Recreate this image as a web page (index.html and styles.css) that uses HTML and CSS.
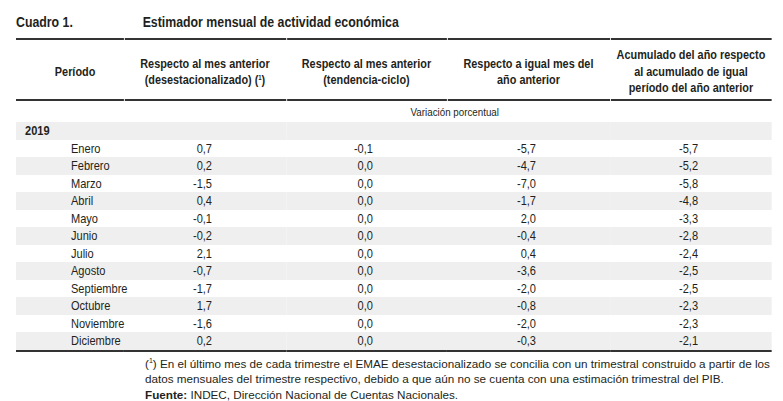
FILE: index.html
```html
<!DOCTYPE html>
<html lang="es">
<head>
<meta charset="utf-8">
<title>Cuadro 1. Estimador mensual de actividad económica</title>
<link rel="stylesheet" href="styles.css">
</head>
<body>
<div class="page">
  <div class="condensed">
    <div class="title">
      <span class="title-num">Cuadro 1.</span>
      <span class="title-text">Estimador mensual de actividad económica</span>
    </div>
    <table class="data">
      <colgroup>
        <col class="c1"><col class="c2"><col class="c3"><col class="c4"><col class="c5">
      </colgroup>
      <thead>
        <tr class="head">
          <th>Período</th>
          <th>Respecto al mes anterior<br>(desestacionalizado) (<sup>1</sup>)</th>
          <th>Respecto al mes anterior<br>(tendencia-ciclo)</th>
          <th>Respecto a igual mes del<br>año anterior</th>
          <th>Acumulado del año respecto<br>al acumulado de igual<br>período del año anterior</th>
        </tr>
      </thead>
      <tbody>
        <tr class="unit"><td></td><td colspan="4">Variación porcentual</td></tr>
        <tr class="shade year"><td>2019</td><td></td><td></td><td></td><td></td></tr>
        <tr><td class="m">Enero</td><td>0,7</td><td>-0,1</td><td>-5,7</td><td>-5,7</td></tr>
        <tr class="shade"><td class="m">Febrero</td><td>0,2</td><td>0,0</td><td>-4,7</td><td>-5,2</td></tr>
        <tr><td class="m">Marzo</td><td>-1,5</td><td>0,0</td><td>-7,0</td><td>-5,8</td></tr>
        <tr class="shade"><td class="m">Abril</td><td>0,4</td><td>0,0</td><td>-1,7</td><td>-4,8</td></tr>
        <tr><td class="m">Mayo</td><td>-0,1</td><td>0,0</td><td>2,0</td><td>-3,3</td></tr>
        <tr class="shade"><td class="m">Junio</td><td>-0,2</td><td>0,0</td><td>-0,4</td><td>-2,8</td></tr>
        <tr><td class="m">Julio</td><td>2,1</td><td>0,0</td><td>0,4</td><td>-2,4</td></tr>
        <tr class="shade"><td class="m">Agosto</td><td>-0,7</td><td>0,0</td><td>-3,6</td><td>-2,5</td></tr>
        <tr><td class="m">Septiembre</td><td>-1,7</td><td>0,0</td><td>-2,0</td><td>-2,5</td></tr>
        <tr class="shade"><td class="m">Octubre</td><td>1,7</td><td>0,0</td><td>-0,8</td><td>-2,3</td></tr>
        <tr><td class="m">Noviembre</td><td>-1,6</td><td>0,0</td><td>-2,0</td><td>-2,3</td></tr>
        <tr class="shade last"><td class="m">Diciembre</td><td>0,2</td><td>0,0</td><td>-0,3</td><td>-2,1</td></tr>
      </tbody>
    </table>
  </div>
  <div class="notes">
    <p class="note">(<sup>1</sup>) En el último mes de cada trimestre el EMAE desestacionalizado se concilia con un trimestral construido a partir de los<br>datos mensuales del trimestre respectivo, debido a que aún no se cuenta con una estimación trimestral del PIB.</p>
    <p class="source"><b>Fuente:</b> INDEC, Dirección Nacional de Cuentas Nacionales.</p>
  </div>
</div>
</body>
</html>
```

FILE: styles.css
```css
html, body {
  margin: 0;
  padding: 0;
  background: #fff;
  overflow: hidden;
}
.page {
  width: 756px;
  padding-left: 16px;
  color: #231f20;
  font-family: "Liberation Sans", Arial, sans-serif;
}
/* Helvetica Condensed look: lay out wide, then compress horizontally */
.condensed {
  width: 889.4px;
  transform: scaleX(0.85);
  transform-origin: 0 0;
}
.title {
  display: flex;
  align-items: baseline;
  height: 38px;
  padding-top: 6px;
  box-sizing: border-box;
  font-size: 14.5px;
  font-weight: bold;
  line-height: 32px;
  color: #231f20;
}
.title-num {
  width: 149px;
}
.data {
  width: 889.4px;
  border-collapse: separate;
  border-spacing: 0;
  table-layout: fixed;
  font-size: 13px;
}
.c1 { width: 127px; }
.c2 { width: 190.6px; }
.c3 { width: 189.4px; }
.c4 { width: 191.8px; }
.c5 { width: 190.6px; }
.head th {
  position: relative;
  border-top: 2px solid #333;
  border-bottom: 2px solid #333;
  height: 63px;
  padding: 5px 0 0;
  box-sizing: border-box;
  font-size: 12.8px;
  font-weight: bold;
  line-height: 16.5px;
  text-align: center;
  vertical-align: middle;
}
.head th + th::before {
  content: "";
  position: absolute;
  left: 0;
  top: -2px;
  bottom: -2px;
  width: 1.3px;
  background: #fff;
}
.head th:first-child {
  padding-left: 12px;
}
.data sup {
  font-size: 7px;
  vertical-align: top;
  line-height: 12px;
}
.unit td {
  height: 21px;
  padding: 0 0 0 16px;
  font-size: 11.5px;
  line-height: 14px;
  text-align: center;
  vertical-align: middle;
}
.unit td:first-child {
  padding: 0;
}
tbody tr:not(.unit) td {
  height: 17.5px;
  padding: 0 87px 0 0;
  line-height: 15px;
  text-align: right;
  vertical-align: middle;
}
tbody tr td.m {
  text-align: left;
  padding: 0 0 0 64.7px;
}
.year td:first-child {
  text-align: left;
  padding: 0 0 0 10.6px;
  font-weight: bold;
}
.shade td {
  background: #efefef;
}
.last td {
  border-bottom: 2px solid #333;
}
.notes {
  padding-left: 129px;
  font-size: 11.7px;
  color: #231f20;
}
.note {
  margin: 4px 0 0;
  line-height: 15px;
  white-space: nowrap;
}
.note sup {
  font-size: 7px;
  vertical-align: top;
  line-height: 10px;
}
.source {
  margin: 1px 0 0;
  line-height: 15px;
  white-space: nowrap;
}
```
